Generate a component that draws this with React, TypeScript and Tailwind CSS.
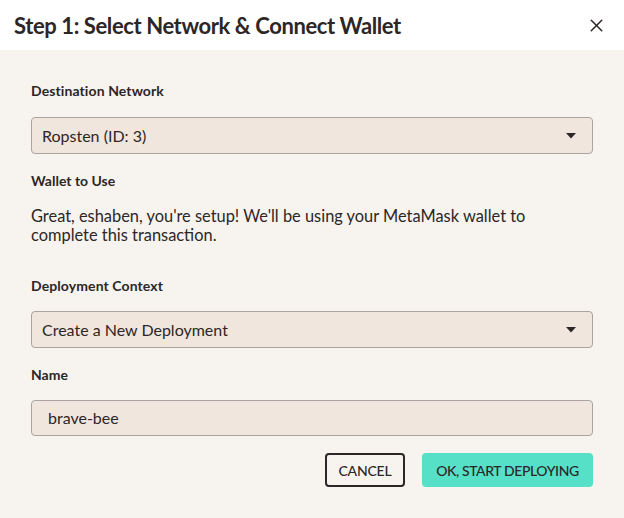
import { X } from "lucide-react";

const font = { fontFamily: "Lato, 'Noto Sans', sans-serif" };

function SelectBox({ value }: { value: string }) {
  return (
    <div className="flex h-[37px] items-center justify-between rounded-[4px] border border-[#aaa3a0] bg-[#f0e6de] pl-[10px] pr-[16px] text-[16px] text-[#2d2626]">
      <span>{value}</span>
      <svg width="10" height="6" viewBox="0 0 10 6">
        <path d="M0 0 L10 0 L5 5.5 Z" fill="#2d2626" />
      </svg>
    </div>
  );
}

export default function App() {
  return (
    <div className="flex h-[518px] w-[624px] flex-col bg-[#f7f4f0] text-[#2d2626]" style={font}>
      <header className="flex h-[50px] items-center justify-between bg-white pl-[14px] pr-[17px]">
        <h1 className="text-[22px] font-bold tracking-[-0.4px] text-[#2d2626]">
          Step 1: Select Network &amp; Connect Wallet
        </h1>
        <X className="h-[21px] w-[21px] text-[#2d2626]" strokeWidth={1.7} />
      </header>

      <main className="flex flex-col px-[31px] pt-[31px]">
        <label className="text-[14px] font-bold leading-[20px] tracking-[0.1px]">Destination Network</label>
        <div className="mt-[16px]">
          <SelectBox value="Ropsten (ID: 3)" />
        </div>

        <label className="mt-[17px] text-[14px] font-bold leading-[20px]">Wallet to Use</label>
        <p className="mt-[15px] text-[16.4px] leading-[19px]">
          Great, eshaben, you're setup! We'll be using your MetaMask wallet to
          <br />
          complete this transaction.
        </p>

        <label className="mt-[32px] text-[14px] font-bold leading-[20px] tracking-[0.1px]">Deployment Context</label>
        <div className="mt-[15px]">
          <SelectBox value="Create a New Deployment" />
        </div>

        <label className="mt-[17px] text-[14px] font-bold leading-[20px]">Name</label>
        <div className="mt-[15px] flex h-[36px] items-center rounded-[4px] border border-[#aaa3a0] bg-[#f0e6de] pl-[16px] text-[16px]">
          brave-bee
        </div>

        <div className="mt-[17px] flex justify-end gap-[17px]">
          <button className="h-[34px] w-[80px] rounded-[4px] border-2 border-[#2d2626] text-[14px] font-medium uppercase tracking-[-0.2px]">
            Cancel
          </button>
          <button className="h-[34px] w-[171px] rounded-[4px] bg-[#55e0c7] text-[14px] font-medium uppercase tracking-[-0.4px]">
            OK, Start Deploying
          </button>
        </div>
      </main>
    </div>
  );
}
